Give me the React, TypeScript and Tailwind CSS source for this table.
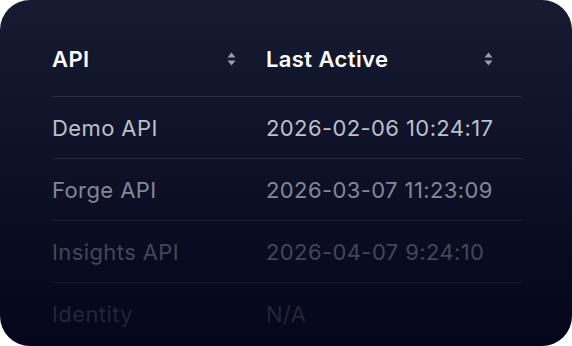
const rows = [
  { name: "Demo API", active: "2026-02-06 10:24:17", text: "text-[#bdbfcd]", line: "border-[#262a3f]" },
  { name: "Forge API", active: "2026-03-07 11:23:09", text: "text-[#84869a]", line: "border-[#1c1f33]" },
  { name: "Insights API", active: "2026-04-07 9:24:10", text: "text-[#434658]", line: "border-[#14172a]" },
  { name: "Identity", active: "N/A", text: "text-[#232538]", line: "border-transparent" },
];

function SortIcon() {
  return (
    <svg width="9" height="14" viewBox="0 0 9 14" className="text-[#9a9cb2]">
      <path d="M4.5 0.5 L8.5 5.5 H0.5 Z" fill="currentColor" />
      <path d="M4.5 13.5 L8.5 8.5 H0.5 Z" fill="currentColor" />
    </svg>
  );
}

export default function App() {
  return (
    <div className="h-[346px] w-[572px] bg-white font-['Inter',sans-serif]">
      <div className="h-full w-full overflow-hidden rounded-[30px] bg-gradient-to-b from-[#171b31] to-[#05061b] pl-[52px] pr-[50px]">
        <div className="grid grid-cols-[214px_256px] border-b border-[#2a2e43] pt-[45px] pb-[23px]">
          <div className="flex items-center justify-between pr-[30px]">
            <span className="text-[22px] font-semibold leading-[28px] tracking-[0.4px] text-white">API</span>
            <SortIcon />
          </div>
          <div className="flex items-center justify-between pr-[29px]">
            <span className="text-[22px] font-semibold leading-[28px] tracking-[0.4px] text-white">Last Active</span>
            <SortIcon />
          </div>
        </div>
        {rows.map((row) => (
          <div
            key={row.name}
            className={`grid h-[62px] grid-cols-[214px_256px] items-center border-b ${row.line} ${row.text} text-[22px] leading-[28px] tracking-[0.4px]`}
          >
            <span>{row.name}</span>
            <span>{row.active}</span>
          </div>
        ))}
      </div>
    </div>
  );
}
